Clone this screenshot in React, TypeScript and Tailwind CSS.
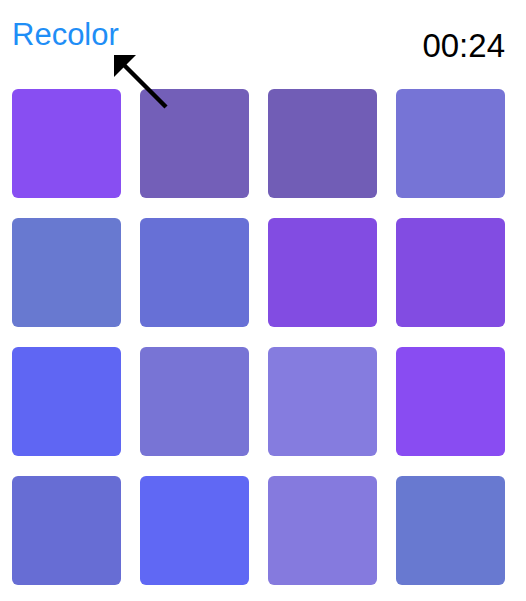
const tiles = [
  "bg-[#884ef2]", "bg-[#735fb8]", "bg-[#715db6]", "bg-[#7674d6]",
  "bg-[#6879d0]", "bg-[#6770d6]", "bg-[#824ce2]", "bg-[#824ce2]",
  "bg-[#5f66f3]", "bg-[#7874d5]", "bg-[#857cdf]", "bg-[#894cf2]",
  "bg-[#676dd4]", "bg-[#6068f4]", "bg-[#857ade]", "bg-[#6879d0]",
];

function Arrow() {
  return (
    <svg
      className="absolute left-[110px] top-[50px]"
      width="62"
      height="62"
      viewBox="0 0 62 62"
    >
      <polygon points="4,5 26,5 4,27" fill="#000" />
      <line x1="11" y1="12" x2="56" y2="57" stroke="#000" strokeWidth="4.5" />
    </svg>
  );
}

export default function App() {
  return (
    <div className="relative w-[526px] h-[601px] bg-white pt-[17px] pl-[12px] font-['Liberation_Sans',Arial,sans-serif]">
      <div className="flex w-[493px] items-start justify-between">
        <button className="text-[31px] leading-[36px] text-[#1f8ef6]">Recolor</button>
        <span className="pt-[10px] text-[33px] leading-[38px] text-black">00:24</span>
      </div>

      <div className="mt-[24px] grid grid-cols-[repeat(4,109px)] auto-rows-[109px] gap-x-[19px] gap-y-[20px]">
        {tiles.map((c, i) => (
          <div key={i} className={`rounded-[6px] ${c}`} />
        ))}
      </div>

      <Arrow />
    </div>
  );
}
